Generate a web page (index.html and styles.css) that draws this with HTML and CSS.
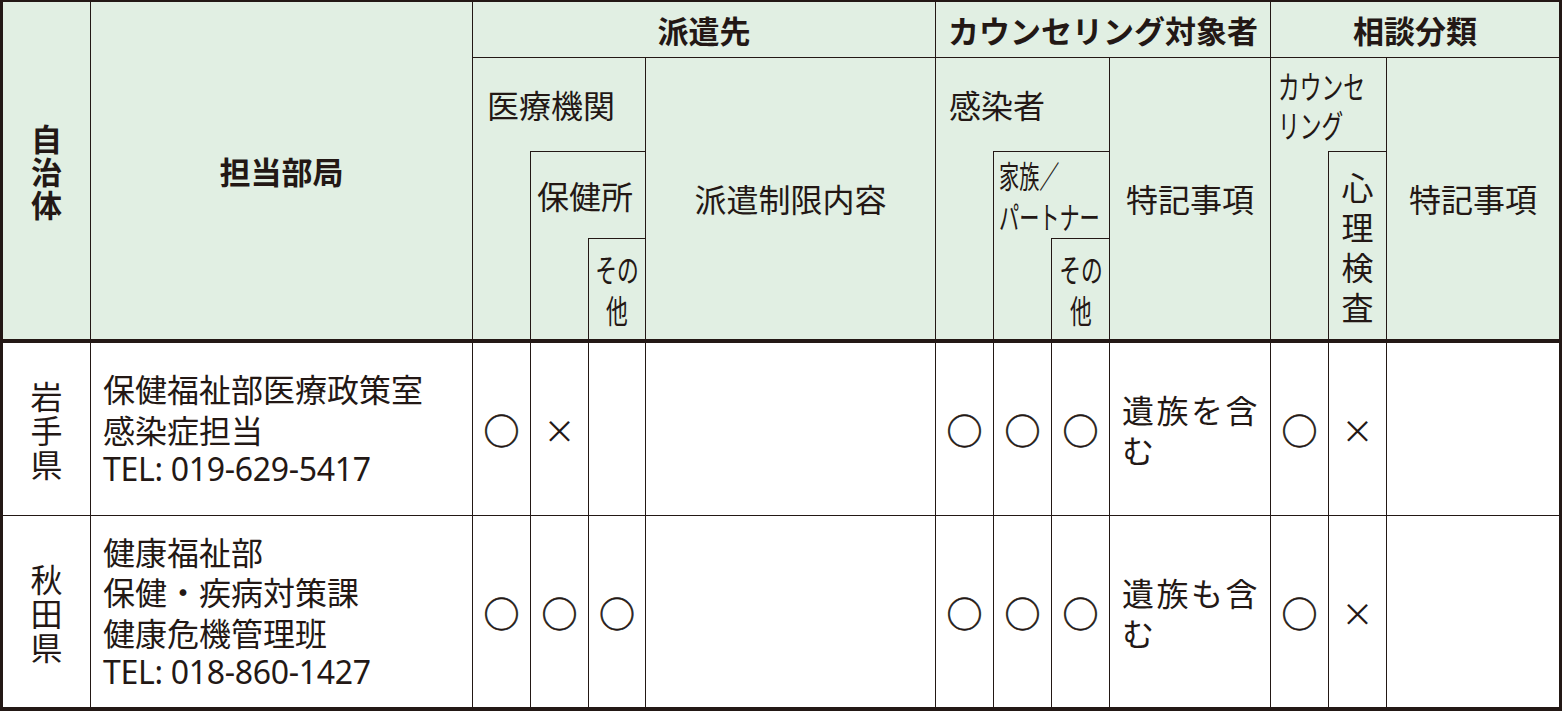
FILE: index.html
```html
<!DOCTYPE html>
<html lang="ja">
<head>
<meta charset="utf-8">
<title>派遣先・カウンセリング対象者・相談分類</title>
<link rel="stylesheet" href="styles.css">
</head>
<body>
<div class="sheet">
  <!-- header -->
  <div class="cell hd h-jichitai"><span class="stack bold">自治体</span></div>
  <div class="cell hd h-bukyoku"><span class="bold">担当部局</span></div>
  <div class="cell hd h-haken"><span class="bold">派遣先</span></div>
  <div class="cell hd h-target"><span class="bold">カウンセリング対象者</span></div>
  <div class="cell hd h-soudan"><span class="bold">相談分類</span></div>

  <div class="cell hd lshape h-iryo"><div class="lab lab-r2 pad-iryo">医療機関</div></div>
  <div class="cell hd lshape h-hokenjo"><div class="lab lab-r3 pad-hokenjo">保健所</div></div>
  <div class="cell hd h-other1"><span class="narrow center">その<br>他</span></div>
  <div class="cell hd h-seigen">派遣制限内容</div>

  <div class="cell hd lshape h-kansen"><div class="lab lab-r2 pad-kansen">感染者</div></div>
  <div class="cell hd lshape h-kazoku"><div class="lab lab-r3 pad-kazoku"><span class="narrow small">家族／<br>パートナー</span></div></div>
  <div class="cell hd h-other2"><span class="narrow center">その<br>他</span></div>
  <div class="cell hd h-tokki1">特記事項</div>

  <div class="cell hd lshape h-counsel"><div class="lab lab-r2 pad-counsel"><span class="narrow tight">カウンセ<br>リング</span></div></div>
  <div class="cell hd h-shinri"><span class="stack wide">心理検査</span></div>
  <div class="cell hd h-tokki2">特記事項</div>

  <!-- body -->
  <div class="row row-first">
    <div class="cell first"><span class="stack pref">岩手県</span></div>
    <div class="cell dept">保健福祉部医療政策室<br>感染症担当<br><span class="tel">TEL: 019-629-5417</span></div>
    <div class="cell"><span class="mark">○</span></div>
    <div class="cell"><span class="mark cross">×</span></div>
    <div class="cell"></div>
    <div class="cell"></div>
    <div class="cell"><span class="mark">○</span></div>
    <div class="cell"><span class="mark">○</span></div>
    <div class="cell"><span class="mark">○</span></div>
    <div class="cell note">遺族を含む</div>
    <div class="cell"><span class="mark">○</span></div>
    <div class="cell"><span class="mark cross">×</span></div>
    <div class="cell"></div>
  </div>
  <div class="row">
    <div class="cell first"><span class="stack pref">秋田県</span></div>
    <div class="cell dept">健康福祉部<br>保健・疾病対策課<br>健康危機管理班<br><span class="tel">TEL: 018-860-1427</span></div>
    <div class="cell"><span class="mark">○</span></div>
    <div class="cell"><span class="mark">○</span></div>
    <div class="cell"><span class="mark">○</span></div>
    <div class="cell"></div>
    <div class="cell"><span class="mark">○</span></div>
    <div class="cell"><span class="mark">○</span></div>
    <div class="cell"><span class="mark">○</span></div>
    <div class="cell note">遺族も含む</div>
    <div class="cell"><span class="mark">○</span></div>
    <div class="cell"><span class="mark cross">×</span></div>
    <div class="cell"></div>
  </div>
</div>
</body>
</html>
```

FILE: styles.css
```css
html, body {
  margin: 0;
  padding: 0;
  background: #ffffff;
}

body {
  font-family: "Noto Sans CJK JP", "Noto Sans", sans-serif;
  color: #231815;
}

.sheet {
  display: grid;
  width: fit-content;
  grid-template-columns: 87px 382px 58px 58px 57px 290px 58px 58px 58px 161px 58px 58px 173px;
  grid-template-rows: 55px 94px 87px 101px 176px 192px;
  border: 3px solid #231815;
  border-top-width: 2px;
  border-bottom-width: 4px;
}

.row {
  display: contents;
}

.cell {
  box-sizing: border-box;
  min-width: 0;
  border-left: 1px solid #231815;
  border-top: 1px solid #231815;
  background: #ffffff;
  font-size: 32px;
  line-height: 1.2;
  display: flex;
  align-items: center;
  justify-content: center;
}

.cell.first {
  border-left: none;
}

.row-first > .cell {
  border-top-width: 4px;
}

.hd {
  background: #e1efe3;
}

.bold {
  font-weight: 700;
  font-size: 31px;
}

/* header placement */
.h-jichitai { grid-column: 1; grid-row: 1 / 5; border-left: none; border-top: none; }
.h-bukyoku  { grid-column: 2; grid-row: 1 / 5; border-top: none; }
.h-haken    { grid-column: 3 / 7; grid-row: 1; border-top: none; }
.h-target   { grid-column: 7 / 11; grid-row: 1; border-top: none; }
.h-soudan   { grid-column: 11 / 14; grid-row: 1; border-top: none; }

.h-iryo     { grid-column: 3 / 6; grid-row: 2 / 5; }
.h-hokenjo  { grid-column: 4 / 6; grid-row: 3 / 5; }
.h-other1   { grid-column: 5 / 6; grid-row: 4 / 5; }
.h-seigen   { grid-column: 6 / 7; grid-row: 2 / 5; }

.h-kansen   { grid-column: 7 / 10; grid-row: 2 / 5; }
.h-kazoku   { grid-column: 8 / 10; grid-row: 3 / 5; }
.h-other2   { grid-column: 9 / 10; grid-row: 4 / 5; }
.h-tokki1   { grid-column: 10 / 11; grid-row: 2 / 5; }

.h-counsel  { grid-column: 11 / 13; grid-row: 2 / 5; }
.h-shinri   { grid-column: 12 / 13; grid-row: 3 / 5; }
.h-tokki2   { grid-column: 13 / 14; grid-row: 2 / 5; }

/* L-shaped header cells: label sits in the top band */
.lshape {
  display: block;
}

.lab {
  display: flex;
  align-items: center;
  white-space: nowrap;
}

.lab-r2 { height: 93px; }
.lab-r3 { height: 86px; }

.pad-iryo    { padding-left: 14px; }
.pad-hokenjo { padding-left: 6px; }
.pad-kansen  { padding-left: 13px; }
.pad-kazoku  { padding-left: 5px; }
.pad-counsel { padding-left: 7px; }

/* condensed text in narrow columns */
.narrow {
  display: inline-block;
  white-space: nowrap;
  line-height: 41px;
  transform: scaleX(0.68);
  transform-origin: left center;
}

.narrow.center {
  text-align: center;
  transform-origin: center center;
}

.narrow.small {
  font-size: 31px;
  transform: scaleX(0.65);
}

.narrow.tight {
  line-height: 39px;
}

/* one character per line */
.stack {
  display: block;
  width: 1em;
  text-align: center;
  line-height: 33px;
}

.stack.wide {
  line-height: 40px;
}

.stack.pref {
  line-height: 34px;
}

/* body */
.dept {
  padding-left: 12px;
  line-height: 40.5px;
  flex-direction: column;
  align-items: flex-start;
  justify-content: center;
}

.tel {
  font-family: "Noto Sans", "Noto Sans CJK JP", sans-serif;
  letter-spacing: -0.3px;
}

.note {
  justify-content: flex-start;
  padding: 0 6px 0 12px;
  letter-spacing: 2.5px;
  line-height: 40px;
}

.mark {
  font-size: 36px;
  line-height: 1;
  -webkit-text-stroke: 0.6px #231815;
}

.mark.cross {
  font-size: 32px;
  -webkit-text-stroke: 0;
}
```
